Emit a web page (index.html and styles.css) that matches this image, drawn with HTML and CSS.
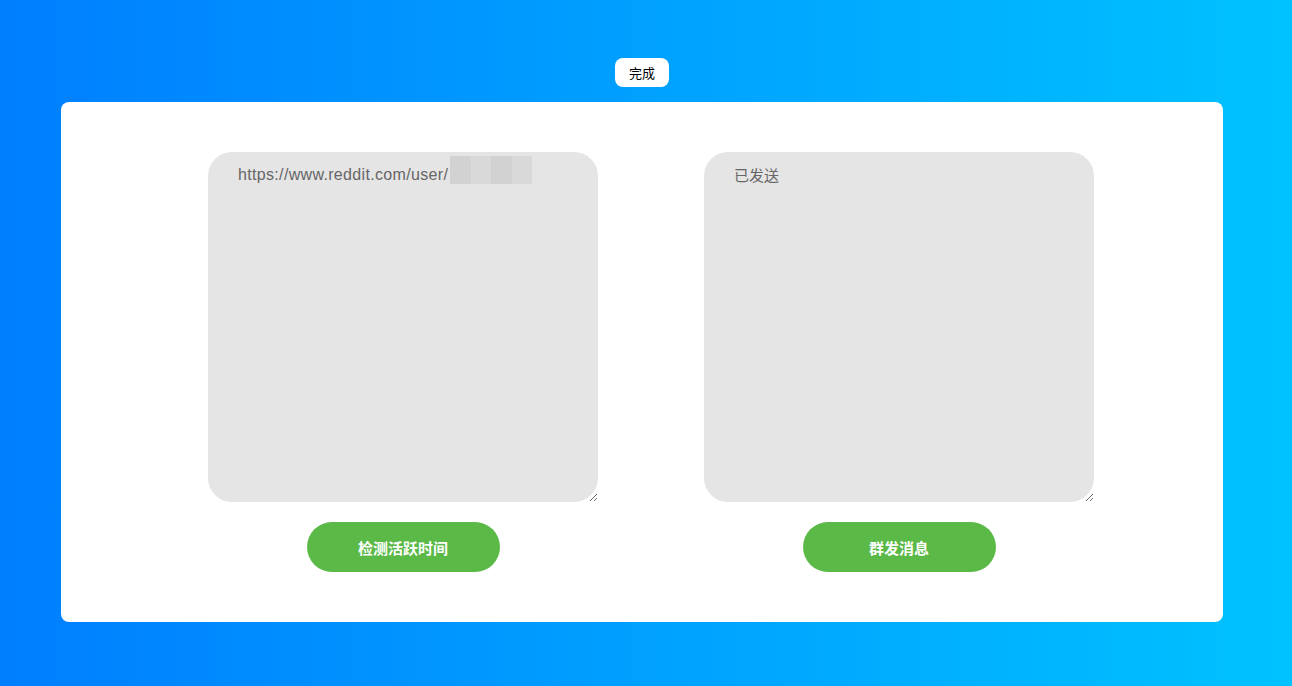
FILE: index.html
```html
<!DOCTYPE html>
<html lang="zh">
<head>
<meta charset="utf-8">
<title>Reddit</title>
<link rel="stylesheet" href="styles.css">
</head>
<body>
<div class="page">
  <div class="top">
    <button class="done">完成</button>
  </div>
  <div class="card">
    <div class="col">
      <div class="box-wrap">
        <textarea class="box url">https://www.reddit.com/user/</textarea>
        <span class="mask"><i></i><i class="b"></i><i></i><i class="b"></i></span>
      </div>
      <button class="act">检测活跃时间</button>
    </div>
    <div class="col">
      <div class="box-wrap">
        <textarea class="box">已发送</textarea>
      </div>
      <button class="act">群发消息</button>
    </div>
  </div>
</div>
</body>
</html>
```
FILE: styles.css
```css
html, body {
  margin: 0;
  padding: 0;
}
body {
  width: 1292px;
  height: 686px;
  background: linear-gradient(90deg, #007efe 0%, #00a4ff 55%, #00c2ff 100%);
  font-family: "Noto Sans CJK SC", "Liberation Sans", sans-serif;
  overflow: hidden;
}
.page {
  padding-top: 58px;
}
.top {
  display: flex;
  justify-content: center;
  padding-right: 8px;
  margin-bottom: 15px;
}
.done {
  width: 54px;
  height: 29px;
  border: none;
  border-radius: 8px;
  background: #fff;
  color: #000;
  font-family: "Noto Sans CJK SC", sans-serif;
  font-size: 13px;
  padding: 0;
}
.card {
  margin: 0 69px 0 61px;
  height: 520px;
  box-sizing: border-box;
  background: #fff;
  border-radius: 8px;
  display: flex;
  gap: 106px;
  padding: 50px 0 0 147px;
}
.col {
  width: 390px;
  display: flex;
  flex-direction: column;
  align-items: center;
  gap: 20px;
}
.box-wrap {
  position: relative;
  width: 390px;
  height: 350px;
}
.box {
  display: block;
  width: 390px;
  height: 350px;
  box-sizing: border-box;
  border: none;
  outline: none;
  background: #e5e5e5;
  border-radius: 24px;
  padding: 12px 30px;
  font-family: "Noto Sans CJK SC", sans-serif;
  font-size: 15px;
  line-height: 22px;
  color: #666;
  resize: both;
}
.box.url {
  font-family: "Liberation Sans", sans-serif;
  font-size: 16px;
  letter-spacing: 0.33px;
}
.mask {
  position: absolute;
  left: 242px;
  top: 4px;
  width: 82px;
  height: 28px;
  display: flex;
}
.mask i {
  flex: 1;
  background: #d2d2d2;
}
.mask i.b {
  background: #d9d9d9;
}
.act {
  width: 193px;
  height: 50px;
  border: none;
  border-radius: 25px;
  background: #5ab947;
  color: #fff;
  font-family: "Noto Sans CJK SC", sans-serif;
  font-weight: 600;
  font-size: 15px;
  padding: 0;
}
```
